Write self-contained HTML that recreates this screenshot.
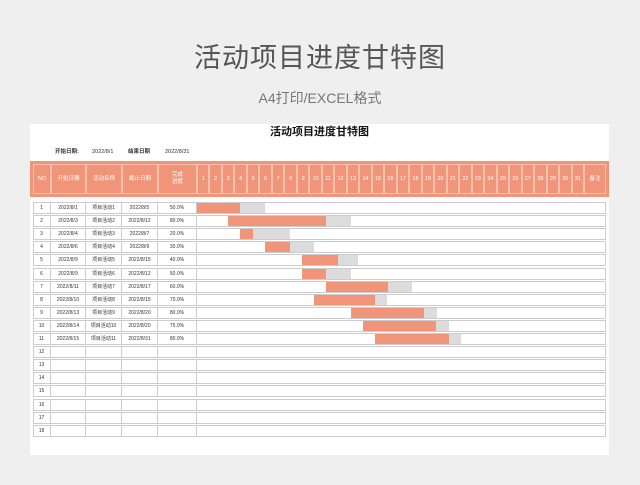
<!DOCTYPE html>
<html><head><meta charset="utf-8"><style>
*{margin:0;padding:0;box-sizing:border-box}
body{width:640px;height:485px;background:#efefef;font-family:"Liberation Sans","Noto Sans CJK SC",sans-serif;position:relative;overflow:hidden}
.a{position:absolute}
.h1{left:0;width:640px;top:36px;text-align:center;font-size:27px;color:#555;letter-spacing:1px}
.h2{left:0;width:640px;top:88px;text-align:center;font-size:14px;color:#777}
.sheet{left:30px;top:124px;width:579px;height:331px;background:#fff}
.t{font-size:5.5px;line-height:7px;height:7px;color:#333;text-align:center}
.hd{left:30px;top:161px;width:579px;height:36px;background:#f0957a}
.hc{position:absolute;top:164px;height:30px;border:1px solid #f7c1ae;color:#fff;font-size:5.5px;display:flex;align-items:center;justify-content:center;text-align:center;line-height:7px}
.row{position:absolute;left:33px;width:573px;height:12px;border:1px solid #ccc}
.c{position:absolute;top:0;height:10px;border-right:1px solid #ccc;font-size:5px;color:#333;text-align:center;line-height:10px}
.bar{position:absolute;height:10px}
</style></head><body>
<div class="a h1">活动项目进度甘特图</div>
<div class="a h2">A4打印/EXCEL格式</div>
<div class="a sheet"></div>
<div class="a" style="left:30px;width:579px;top:123px;text-align:center;font-size:11px;font-weight:bold;color:#111">活动项目进度甘特图</div>
<div class="a t" style="left:55px;top:149px;font-weight:bold">开始日期:</div>
<div class="a t" style="left:92px;top:149px">2022/8/1</div>
<div class="a t" style="left:128px;top:149px;font-weight:bold">结束日期</div>
<div class="a t" style="left:165px;top:149px">2022/8/31</div>
<div class="a hd"></div>
<div id="g"></div>
<script>
var g=document.getElementById('g'),h='';
var cols=[[33,51,'NO'],[51,86,'开始日期'],[86,122,'活动名称'],[122,158,'截止日期'],[158,197,'完成<br>进度']];
cols.forEach(function(c){h+='<div class="hc" style="left:'+c[0]+'px;width:'+(c[1]-c[0])+'px">'+c[2]+'</div>';});
var dw=(584-197)/31;
for(var i=0;i<31;i++)h+='<div class="hc" style="left:'+(197+i*dw)+'px;width:'+dw+'px">'+(i+1)+'</div>';
h+='<div class="hc" style="left:584px;width:22px">备注</div>';
var d=[['2022/8/1','项目活动1','2022/8/5','50.0%',197,240,265],['2022/8/3','项目活动2','2022/8/12','80.0%',228,326,351],['2022/8/4','项目活动3','2022/8/7','20.0%',240,253,290],['2022/8/6','项目活动4','2022/8/9','30.0%',265,290,314],['2022/8/9','项目活动5','2022/8/15','40.0%',302,338,358],['2022/8/9','项目活动6','2022/8/12','50.0%',302,326,351],['2022/8/11','项目活动7','2022/8/17','60.0%',326,388,412],['2022/8/10','项目活动8','2022/8/15','70.0%',314,375,387],['2022/8/13','项目活动9','2022/8/20','80.0%',351,424,437],['2022/8/14','项目活动10','2022/8/20','75.0%',363,436,449],['2022/8/15','项目活动11','2022/8/31','80.0%',375,449,461]];
for(var r=0;r<18;r++){var y=202+r*13.1;var x=d[r]||['','','','',0,0,0];
h+='<div class="row" style="top:'+y+'px">';
var v=[r+1,x[0],x[1],x[2],x[3]];
cols.forEach(function(c,k){h+='<div class="c" style="left:'+(c[0]-34)+'px;width:'+(c[1]-c[0])+'px">'+v[k]+'</div>';});
h+='</div>';
if(d[r]){h+='<div class="bar a" style="top:'+(y+1)+'px;left:'+x[4]+'px;width:'+(x[5]-x[4])+'px;background:#f0957a"></div>';
h+='<div class="bar a" style="top:'+(y+1)+'px;left:'+x[5]+'px;width:'+(x[6]-x[5])+'px;background:#dcdcdc"></div>';}
}
g.innerHTML=h;
</script>
</body></html>
